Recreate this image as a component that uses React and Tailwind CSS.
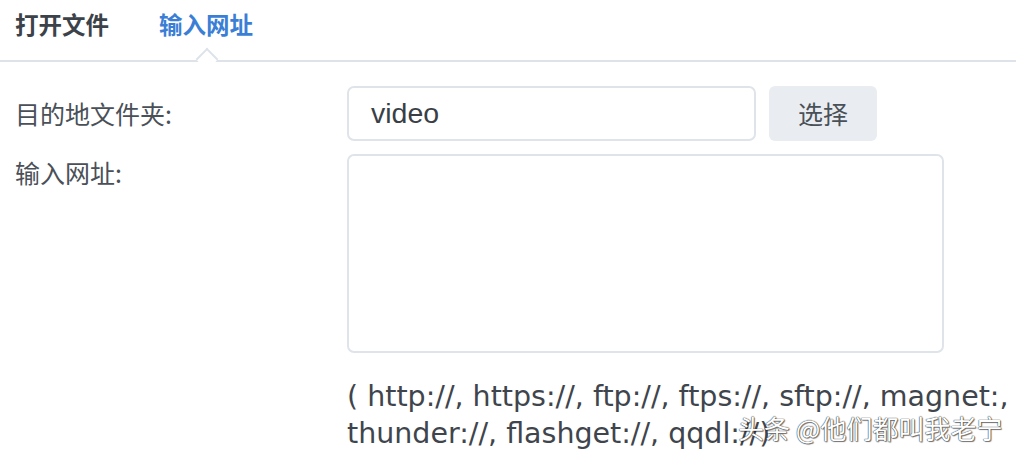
import React from 'react';

const font = { fontFamily: '"Noto Sans CJK SC", "Liberation Sans", sans-serif' };

export default function App() {
  return (
    <div className="relative w-[1016px] h-[454px] bg-white overflow-hidden text-[#4a5058]" style={font}>
      {/* Tabs */}
      <div className="relative h-[62px] border-b-2 border-[#dde3e9] flex items-start pl-[15px] gap-[50px] pt-[7px]">
        <div className="text-[23.5px] font-bold text-[#3c4249] leading-[34px]">打开文件</div>
        <div className="relative text-[23.5px] font-bold text-[#3a7fd5] leading-[34px]">
          输入网址
          <span className="absolute left-[40px] top-[44px] w-[16px] h-[16px] rotate-45 bg-white border-l-2 border-t-2 border-[#dde3e9]" />
        </div>
      </div>

      {/* Form */}
      <div className="grid grid-cols-[332px_1fr] gap-y-[13px] pl-[15px] pt-[24px]">
        <div className="text-[25px] leading-[54px]">目的地文件夹:</div>
        <div className="flex gap-[13px]">
          <div className="w-[409px] h-[55px] border-2 border-[#dfe4ea] rounded-[7px] flex items-center pl-[22px] text-[28.5px] text-[#3a3f46]" style={{ fontFamily: '"Liberation Sans", sans-serif' }}>
            video
          </div>
          <button className="w-[108px] h-[55px] bg-[#e9edf1] rounded-[6px] text-[25px] text-[#4a5058]">选择</button>
        </div>

        <div className="text-[25px] leading-[36px]">输入网址:</div>
        <div className="w-[597px] h-[199px] border-2 border-[#dfe4ea] rounded-[7px]" />

        <div />
        <div
          className="pt-[12px] text-[28.5px] leading-[37px] text-[#3f454c] whitespace-nowrap"
          style={{ fontFamily: '"DejaVu Sans", Verdana, sans-serif' }}
        >
          <div>( http://, https://, ftp://, ftps://, sftp://, magnet:,</div>
          <div>thunder://, flashget://, qqdl://)</div>
        </div>
      </div>

      {/* Watermark */}
      <div
        className="absolute left-[738px] top-[411px] text-[26px] leading-[34px] text-white"
        style={{ textShadow: '0 0 1px #333, 0 0 1px #333, 1px 1px 1px rgba(0,0,0,0.5)' }}
      >
        头条 @他们都叫我老宁
      </div>
    </div>
  );
}
